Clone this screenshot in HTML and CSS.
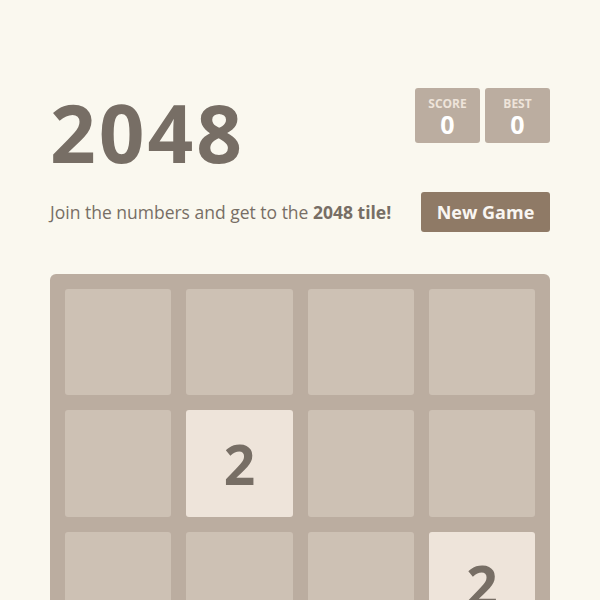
FILE: index.html
```html
<!DOCTYPE html>
<html>
<head>
<meta charset="utf-8">
<link rel="stylesheet" href="styles.css">
</head>
<body>
<div class="container">
  <div class="heading">
    <h1 class="title">2048</h1>
    <div class="scores">
      <div class="score-box"><div class="label">SCORE</div><div class="value">0</div></div>
      <div class="score-box"><div class="label">BEST</div><div class="value">0</div></div>
    </div>
  </div>
  <div class="above-game">
    <p class="intro">Join the numbers and get to the <strong>2048 tile!</strong></p>
    <a class="button">New Game</a>
  </div>
  <div class="board">
    <div class="cell"></div><div class="cell"></div><div class="cell"></div><div class="cell"></div>
    <div class="cell"></div><div class="cell tile">2</div><div class="cell"></div><div class="cell"></div>
    <div class="cell"></div><div class="cell"></div><div class="cell"></div><div class="cell tile">2</div>
    <div class="cell"></div><div class="cell"></div><div class="cell"></div><div class="cell"></div>
  </div>
</div>
</body>
</html>
```
FILE: styles.css
```css
html, body {
  margin: 0;
  padding: 0;
  background: #faf8ef;
  color: #776e65;
  font-family: "Open Sans", "DejaVu Sans", sans-serif;
}
.container {
  width: 500px;
  margin: 0 auto;
  padding-top: 88px;
}
.heading {
  display: flex;
  justify-content: space-between;
  align-items: flex-start;
}
.title {
  margin: 0;
  font-size: 80px;
  font-weight: 700;
  line-height: 1;
  margin-top: 4px;
  letter-spacing: 3px;
}
.scores {
  display: flex;
  gap: 5px;
}
.score-box {
  width: 65px;
  height: 55px;
  background: #bbada0;
  border-radius: 3px;
  color: #fff;
  text-align: center;
  box-sizing: border-box;
  padding-top: 9px;
}
.label {
  font-size: 12px;
  font-weight: 700;
  color: #eee4da;
  line-height: 14px;
}
.value {
  font-size: 25px;
  font-weight: 700;
  line-height: 26px;
}
.above-game {
  display: flex;
  justify-content: space-between;
  align-items: center;
  margin-top: 20px;
}
.intro {
  margin: 0;
  font-size: 17.5px;
  line-height: 24px;
}
.intro strong {
  font-weight: 700;
}
.button {
  display: block;
  width: 129px;
  height: 40px;
  line-height: 40px;
  background: #8f7a66;
  color: #f9f6f2;
  border-radius: 3px;
  text-align: center;
  font-weight: 700;
  font-size: 18px;
}
.board {
  margin-top: 42px;
  background: #bbada0;
  border-radius: 6px;
  padding: 15px;
  display: grid;
  grid-template-columns: repeat(4, 1fr);
  gap: 15px;
}
.cell {
  height: 106.25px;
  border-radius: 3px;
  background: #cdc1b4;
}
.tile {
  background: #eee4da;
  color: #776e65;
  font-size: 55px;
  font-weight: 700;
  display: flex;
  align-items: center;
  justify-content: center;
}
```
